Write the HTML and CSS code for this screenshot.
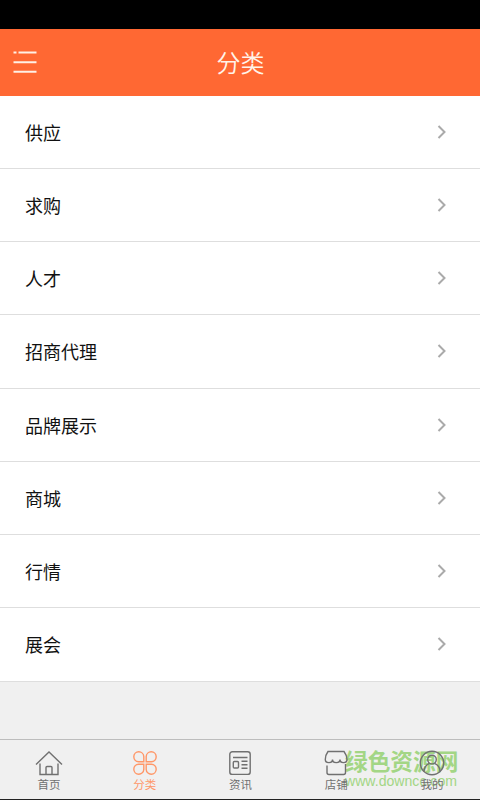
FILE: index.html
```html
<!DOCTYPE html>
<html lang="zh-CN">
<head>
<meta charset="utf-8">
<title>分类</title>
<link rel="stylesheet" href="styles.css">
</head>
<body>
<div class="app">
  <div class="status"></div>
  <header class="header">
    <svg class="menu" viewBox="0 0 24 24" width="24" height="24"><path d="M0.5 2.5H3.5M5.5 2.5H23.5M0.5 12.2H23.5M0.5 21.7H23.5"/></svg>
    <h1 class="title">分类</h1>
  </header>
  <ul class="list">
    <li class="row"><span>供应</span><svg class="chevron" viewBox="0 0 10 16"><path d="M1.5 2L7.5 8L1.5 14"/></svg></li>
    <li class="row"><span>求购</span><svg class="chevron" viewBox="0 0 10 16"><path d="M1.5 2L7.5 8L1.5 14"/></svg></li>
    <li class="row"><span>人才</span><svg class="chevron" viewBox="0 0 10 16"><path d="M1.5 2L7.5 8L1.5 14"/></svg></li>
    <li class="row"><span>招商代理</span><svg class="chevron" viewBox="0 0 10 16"><path d="M1.5 2L7.5 8L1.5 14"/></svg></li>
    <li class="row"><span>品牌展示</span><svg class="chevron" viewBox="0 0 10 16"><path d="M1.5 2L7.5 8L1.5 14"/></svg></li>
    <li class="row"><span>商城</span><svg class="chevron" viewBox="0 0 10 16"><path d="M1.5 2L7.5 8L1.5 14"/></svg></li>
    <li class="row"><span>行情</span><svg class="chevron" viewBox="0 0 10 16"><path d="M1.5 2L7.5 8L1.5 14"/></svg></li>
    <li class="row"><span>展会</span><svg class="chevron" viewBox="0 0 10 16"><path d="M1.5 2L7.5 8L1.5 14"/></svg></li>
  </ul>
  <nav class="tabs">
    <div class="tab">
      <svg class="icon" viewBox="0 0 28 26"><path d="M1 14.5L14 2L27 14.5M5 13.5V24.5H23V13.5M11 24.5V17.5Q11 16.5 12 16.5H16Q17 16.5 17 17.5V24.5"/></svg>
      <span>首页</span>
    </div>
    <div class="tab active">
      <svg class="icon" viewBox="0 0 28 26"><path d="M12.8 11.8H7.6A5 5 0 1 1 12.8 6.6ZM15.2 11.8H20.4A5 5 0 1 0 15.2 6.6ZM12.8 14.2H7.6A5 5 0 1 0 12.8 19.4ZM15.2 14.2H20.4A5 5 0 1 1 15.2 19.4Z"/></svg>
      <span>分类</span>
    </div>
    <div class="tab">
      <svg class="icon" viewBox="0 0 28 26"><rect x="3.8" y="1.8" width="20.4" height="22.6" rx="2.5"/><path d="M7 7.5H21.5M15.5 11.3H21.5M15.5 14.8H21.5M15.5 18.3H21.5"/><rect x="7.3" y="11.5" width="5.2" height="6.5" rx="1"/></svg>
      <span>资讯</span>
    </div>
    <div class="tab">
      <svg class="icon" viewBox="0 0 28 26"><path d="M6 1.5H22C23.5 3.5 25 6.5 25 9.5C25 13.7 18 13.7 18 9.5C18 13.7 10.5 13.7 10.5 9.5C10.5 13.7 3.3 13.7 3.3 9.5C3.3 6.5 4.5 3.5 6 1.5ZM5 15.5V22.5Q5 24.5 7 24.5H21.5Q23.5 24.5 23.5 22.5V14"/></svg>
      <span>店铺</span>
    </div>
    <div class="tab">
      <svg class="icon" viewBox="0 0 28 26"><circle cx="14" cy="13" r="11.7"/><circle cx="14" cy="9.6" r="4.3"/><path d="M6 21.5C6 16.5 9 14.3 11.5 13.3M22 21.5C22 16.5 19 14.3 16.5 13.3"/></svg>
      <span>我的</span>
    </div>
  </nav>
  <div class="watermark">
    <div class="mark-name">绿色资源网</div>
    <div class="mark-url">www.downcc.com</div>
  </div>
</div>
</body>
</html>
```

FILE: styles.css
```css
* { box-sizing: border-box; }
body { margin: 0; font-family: "Noto Sans CJK SC", sans-serif; }
.app {
  position: relative;
  display: flex;
  flex-direction: column;
  width: 480px;
  height: 800px;
  overflow: hidden;
  background: #f0f0f0;
}
.status { height: 29px; flex: none; background: #000; }
.header {
  display: grid;
  grid-template-columns: 60px 1fr 60px;
  align-items: center;
  height: 66.5px;
  flex: none;
  padding-left: 13px;
  padding-right: 12px;
  background: #ff6833;
}
.menu { fill: none; stroke: #fff0e5; stroke-width: 2; }
.title {
  margin: 0;
  text-align: center;
  font-size: 24px;
  line-height: 36px;
  font-weight: 350;
  color: #fff4ea;
}
.list { margin: 0; padding: 0; list-style: none; background: #fff; }
.row {
  display: flex;
  align-items: center;
  justify-content: space-between;
  height: 73.25px;
  padding: 0 33px 0 25px;
  border-bottom: 1px solid #dedede;
  font-size: 18px;
  line-height: 26px;
  color: #111;
}
.chevron {
  width: 10px;
  height: 16px;
  fill: none;
  stroke: #aaa;
  stroke-width: 2;
}
.tabs {
  display: flex;
  height: 61px;
  flex: none;
  margin-top: auto;
  padding-left: 1px;
  border-top: 1px solid #bdbdbd;
  border-bottom: 1px solid #222;
  z-index: 1;
}
.tab {
  display: flex;
  flex-direction: column;
  align-items: center;
  width: 96px;
  padding-top: 10px;
  color: #707070;
  font-size: 11.5px;
  line-height: 17px;
}
.active { color: #ff9768; }
.icon {
  width: 28px;
  height: 26px;
  flex: none;
  fill: none;
  stroke: currentColor;
  stroke-width: 1.4;
}
.watermark {
  position: absolute;
  left: 345px;
  top: 746px;
  color: #a3d685;
  white-space: nowrap;
}
.mark-name { font-size: 22.7px; line-height: 30px; font-weight: 700; }
.mark-url { font: 14.1px/17px "Liberation Sans", sans-serif; margin-top: -3px; }
```
